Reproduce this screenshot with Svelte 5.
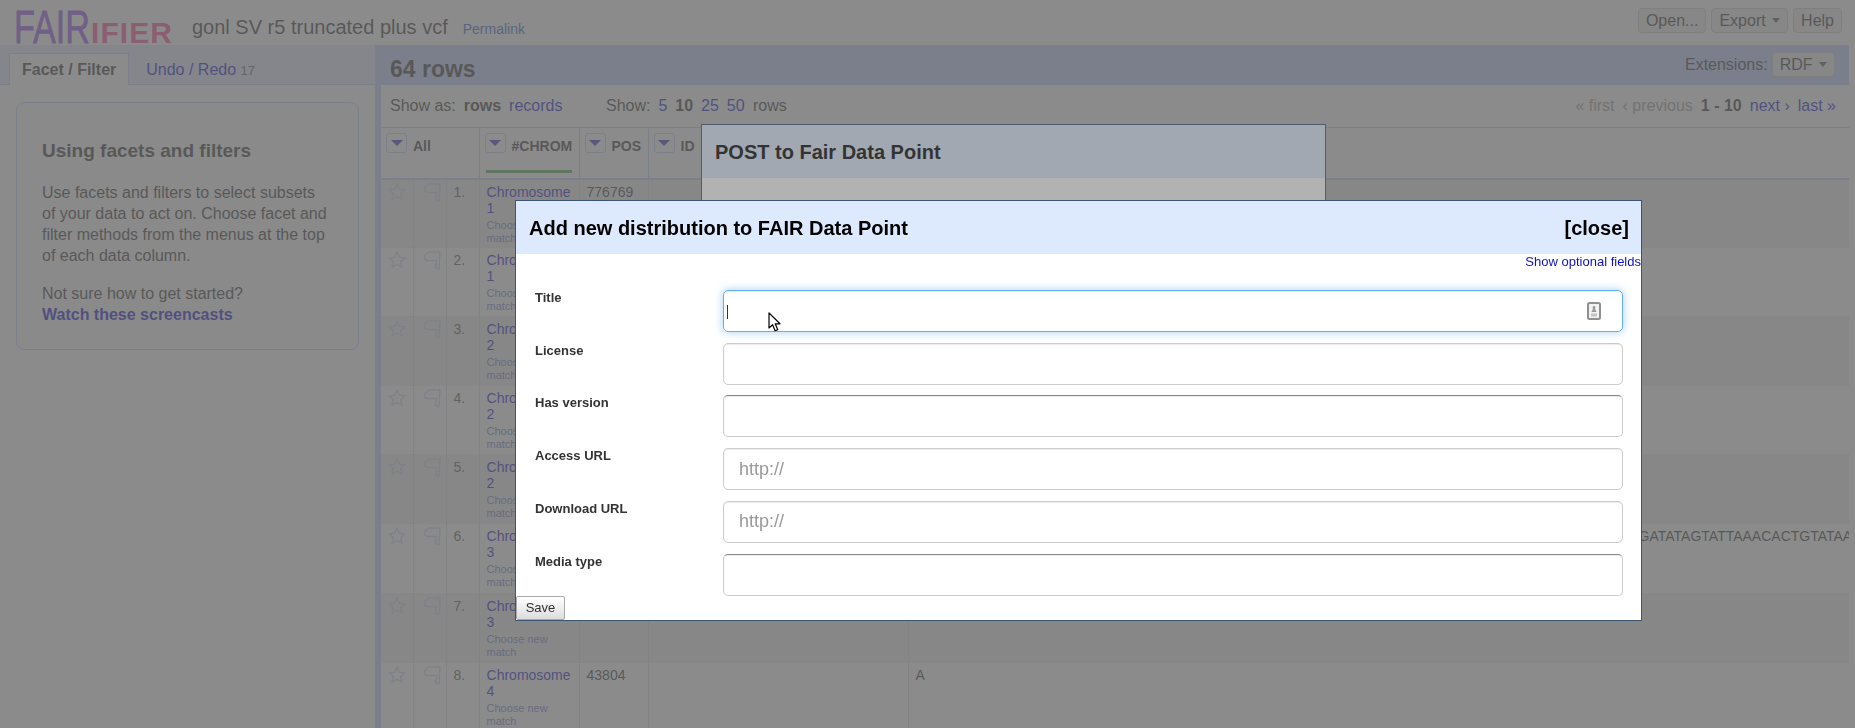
<script>
  const rows = [
    { n: 1, chrom: 1, pos: "776769", ref: "" },
    { n: 2, chrom: 1, pos: "1058020", ref: "" },
    { n: 3, chrom: 2, pos: "34128", ref: "" },
    { n: 4, chrom: 2, pos: "88902", ref: "" },
    { n: 5, chrom: 2, pos: "120417", ref: "" },
    { n: 6, chrom: 3, pos: "60251", ref: "ATTAGC".repeat(12) + "TGACATG" + "GATATAGTATTAAACACTGTATAAGCTTAG" },
    { n: 7, chrom: 3, pos: "71133", ref: "" },
    { n: 8, chrom: 4, pos: "43804", ref: "A" },
  ];

  const columns = [
    { name: "All", span: 3 },
    { name: "#CHROM", bar: true },
    { name: "POS" },
    { name: "ID" },
    { name: "" },
  ];

  const fields = [
    { label: "Title", focus: true },
    { label: "License" },
    { label: "Has version", dark: true },
    { label: "Access URL", placeholder: "http://" },
    { label: "Download URL", placeholder: "http://" },
    { label: "Media type", dark: true },
  ];
</script>

<div class="page">
  <header class="top">
    <svg class="logo" width="160" height="36" viewBox="0 0 160 36" aria-label="FAIRifier">
      <text class="logo-fair" x="0" y="35" textLength="76" lengthAdjust="spacingAndGlyphs">FAIR</text>
      <text class="logo-ifier" x="77" y="35" textLength="81" lengthAdjust="spacing">IFIER</text>
    </svg>
    <span class="project">gonl SV r5 truncated plus vcf</span>
    <a class="permalink" href="#top">Permalink</a>
    <div class="top-actions">
      <button class="btn">Open...</button>
      <button class="btn">Export <i class="caret"></i></button>
      <button class="btn">Help</button>
    </div>
  </header>

  <div class="main">
    <aside class="left">
      <div class="tabs">
        <span class="tab active">Facet / Filter</span>
        <span class="tab"><a href="#top">Undo / Redo</a> <small>17</small></span>
      </div>
      <div class="help">
        <h2>Using facets and filters</h2>
        <p>Use facets and filters to select subsets of your data to act on. Choose facet and filter methods from the menus at the top of each data column.</p>
        <p>Not sure how to get started?<br /><a href="#top"><b>Watch these screencasts</b></a></p>
      </div>
    </aside>

    <section class="right">
      <div class="summary">
        <h1>64 rows</h1>
        <div class="ext">Extensions: <button class="btn">RDF <i class="caret"></i></button></div>
      </div>
      <div class="view">
        <div class="controls">
          <span class="mode">Show as: <b>rows</b> <a href="#top">records</a></span>
          <span class="size">Show: <a href="#top">5</a> <b>10</b> <a href="#top">25</a> <a href="#top">50</a> <span>rows</span></span>
          <span class="pager">
            <span class="off">« first</span>
            <span class="off">‹ previous</span>
            <b>1 - 10</b>
            <a href="#top">next ›</a>
            <a href="#top">last »</a>
          </span>
        </div>
        <table>
          <colgroup>
            <col style="width:32px" /><col style="width:33px" /><col style="width:33px" />
            <col style="width:100px" /><col style="width:69px" /><col style="width:260px" /><col />
          </colgroup>
          <thead>
            <tr>
              {#each columns as col}
                <th colspan={col.span || 1}>
                  {#if col.name}
                    <div class="col-head">
                      <span class="menu"><i></i></span>
                      <span class="col-name">{col.name}</span>
                    </div>
                  {/if}
                  {#if col.bar}<div class="recon-bar"></div>{/if}
                </th>
              {/each}
            </tr>
          </thead>
          <tbody>
            {#each rows as row}
              <tr class:odd={row.n % 2 === 1}>
                <td class="icon">
                  <svg width="18" height="18" viewBox="0 0 18 18"><path d="M9 1l2.3 5.2 5.7.6-4.3 3.8 1.3 5.6L9 13.3l-5 2.9 1.3-5.6L1 6.8l5.7-.6z" /></svg>
                </td>
                <td class="icon flag">
                  <svg width="18" height="19" viewBox="0 0 18 19"><path d="M1.5 4.5L6 1h11l-1 17-3.5-1.5 1-7H4L1.5 8z" /></svg>
                </td>
                <td class="num">{row.n}.</td>
                <td>
                  <a href="#top">Chromosome {row.chrom}</a>
                  <div class="match">Choose new match</div>
                </td>
                <td>{row.pos}</td>
                <td></td>
                <td class="ref">{row.ref}</td>
              </tr>
            {/each}
          </tbody>
        </table>
      </div>
    </section>
  </div>
</div>

<div class="overlay"></div>
<div class="dialog post">
  <div class="dialog-head"><span>POST to Fair Data Point</span></div>
</div>

<div class="overlay"></div>
<div class="dialog add">
  <div class="dialog-head">
    <span>Add new distribution to FAIR Data Point</span>
    <span>[close]</span>
  </div>
  <div class="optional"><a href="#top">Show optional fields</a></div>
  <form class="form">
    {#each fields as field}
      <div class="label">{field.label}</div>
      <div class="input" class:focus={field.focus} class:dark={field.dark}>
        {#if field.placeholder}<span class="placeholder">{field.placeholder}</span>{/if}
        {#if field.focus}
          <i class="text-caret"></i>
          <svg class="contact" width="14" height="18" viewBox="0 0 14 18">
            <rect x="1" y="1" width="12" height="16" rx="1.5" fill="#f2f2f2" stroke="#909090" stroke-width="2" />
            <path d="M7 4a1.4 1.4 0 0 1 .9 2.5L9.5 10h-5l1.6-3.5A1.4 1.4 0 0 1 7 4z" fill="#999" />
            <rect x="4" y="11.5" width="6" height="3" fill="#c4c4c4" />
          </svg>
        {/if}
      </div>
    {/each}
  </form>
  <button class="save">Save</button>
  <svg class="pointer" width="14" height="20" viewBox="0 0 14 20">
    <path d="M1 1v15l3.6-3.3 2.5 6 2.6-1.1-2.5-5.8H12z" fill="#fff" stroke="#000" stroke-width="1.2" stroke-linejoin="round" />
  </svg>
</div>

<style>
  :global(body) {
    margin: 0;
    font-family: "Liberation Sans", Arial, sans-serif;
    font-size: 16px;
    color: #333;
    overflow: hidden;
  }

  a {
    color: #11c;
    text-decoration: none;
  }

  .page {
    height: 728px;
    overflow: hidden;
    background: #fff;
    display: flex;
    flex-direction: column;
  }

  .top {
    flex: 0 0 45px;
    display: flex;
    align-items: flex-start;
    padding: 0 13px 0 14px;
    box-sizing: border-box;
  }

  .logo {
    margin: 8px 18px 0 0;
    flex-shrink: 0;
    overflow: visible;
  }

  .logo-fair {
    font-family: "Liberation Sans", sans-serif;
    font-size: 47px;
    fill: #9550e8;
    stroke: #9550e8;
    stroke-width: 0.8;
  }

  .logo-ifier {
    font-family: "Liberation Sans", sans-serif;
    font-weight: 700;
    font-size: 30px;
    fill: #ff4a96;
  }

  .project {
    font-size: 20px;
    line-height: 24px;
    margin: 15px 15px 0 0;
  }

  .permalink {
    font-size: 14px;
    line-height: 16px;
    color: #36c;
    margin-top: 21px;
  }

  .top-actions {
    margin: 8px 0 0 auto;
    display: flex;
    gap: 5px;
  }

  .btn {
    font: inherit;
    font-size: 16px;
    color: #333;
    height: 25px;
    padding: 0 7px;
    background: #eee;
    border: 1px solid #ccc;
    border-radius: 4px;
    white-space: nowrap;
  }

  .caret {
    display: inline-block;
    border: 4.5px solid transparent;
    border-top: 5px solid #555;
    border-bottom: 0;
    margin: 0 0 2px 2px;
    vertical-align: middle;
  }

  .main {
    flex: 1;
    display: flex;
    min-height: 0;
  }

  .left {
    flex: 0 0 375px;
  }

  .tabs {
    height: 40px;
    box-sizing: border-box;
    background: #e3e9ff;
    border-bottom: 1px solid #bcf;
    padding: 8px 0 0 9px;
    display: flex;
  }

  .tab {
    height: 32px;
    box-sizing: border-box;
    padding: 7px 12px 0;
    margin-right: 5px;
    border: 1px solid transparent;
    border-bottom: 0;
  }

  .tab.active {
    background: #fff;
    border-color: #bcf;
    font-weight: 700;
    margin-right: 4px;
  }

  .tab small {
    font-size: 13px;
    color: #666;
  }

  .help {
    margin: 17px 16px 0;
    height: 248px;
    box-sizing: border-box;
    padding: 37px 29px 0 25px;
    border: 1px solid #bcf;
    border-radius: 8px;
    font-size: 16px;
    line-height: 21px;
    background: #f8f8f8;
  }

  .help h2 {
    margin: 0 0 20px;
    font-size: 19px;
    line-height: 22px;
  }

  .help p {
    margin: 0 0 17px;
  }

  .right {
    flex: 1;
    min-width: 0;
    margin-right: 6px;
    display: flex;
    flex-direction: column;
  }

  .summary {
    flex: 0 0 40px;
    background: #bcf;
    display: flex;
    align-items: center;
    justify-content: space-between;
    padding: 0 14px 0 15px;
  }

  .summary h1 {
    margin: 8px 0 0;
    font-size: 23px;
  }

  .ext {
    display: flex;
    align-items: center;
    gap: 4px;
    margin-top: -1px;
  }

  .view {
    flex: 1;
    border-left: 6px solid #bcf;
    min-height: 0;
  }

  .controls {
    height: 42px;
    display: flex;
    align-items: center;
    padding: 0 13px 0 9px;
    box-sizing: border-box;
  }

  .mode {
    width: 216px;
  }

  .size a,
  .size b,
  .mode b,
  .mode a {
    margin-left: 3.5px;
  }

  .size span {
    margin-left: 4px;
  }

  .pager {
    margin-left: auto;
    display: flex;
    gap: 8px;
  }

  .pager .off {
    color: #999;
  }

  table {
    width: 100%;
    table-layout: fixed;
    border-collapse: collapse;
    font-size: 14px;
    border-top: 1px solid #bcf;
  }

  th {
    height: 51px;
    padding: 5px 5px 0;
    box-sizing: border-box;
    border-bottom: 2px solid #bcf;
    border-right: 1px solid #bcf;
    text-align: left;
    vertical-align: top;
    font-size: 14px;
  }

  th:last-child {
    border-right: 0;
  }

  .col-head {
    display: flex;
    align-items: flex-start;
    gap: 6px;
    white-space: nowrap;
  }

  .col-name {
    line-height: 16px;
    margin-top: 5px;
  }

  .menu {
    width: 21px;
    height: 20px;
    box-sizing: border-box;
    border: 1px solid #bcf;
    border-radius: 3px;
    display: flex;
    justify-content: center;
    padding-top: 6px;
    flex-shrink: 0;
  }

  .menu i {
    width: 0;
    height: 0;
    border: 6px solid transparent;
    border-top: 6px solid #33c;
    border-bottom: 0;
  }

  .recon-bar {
    height: 3px;
    margin: 16px 2px 0 1px;
    background: #5a5;
  }

  td {
    height: 69.1px;
    box-sizing: border-box;
    padding: 4px 7px 0;
    vertical-align: top;
    border-top: 1px dotted #ddd;
    border-right: 1px solid #ddd;
    line-height: 16px;
    overflow: hidden;
    white-space: normal;
  }

  td:last-child {
    border-right: 0;
  }

  tr.odd td {
    background: #eee;
  }

  tbody tr:first-child td {
    border-top: 0;
  }

  td.icon {
    padding: 3px 0 0 7px;
  }

  td.flag {
    padding-left: 9px;
  }

  .icon svg {
    display: block;
    fill: none;
    stroke: #ccd6f4;
    stroke-width: 1.5;
    stroke-linejoin: round;
  }

  .num {
    color: #555;
  }

  .match {
    font-size: 11px;
    line-height: 13px;
    margin-top: 3px;
    color: #6a7fd0;
  }

  .ref {
    white-space: nowrap;
  }

  .overlay {
    position: fixed;
    inset: 0;
    background: #666;
    opacity: 0.5;
  }

  .dialog {
    position: fixed;
    box-sizing: border-box;
    background: #fff;
    border: 1px solid #3c5573;
  }

  .dialog-head {
    height: 53px;
    background: #ddeafd;
    color: #000;
    font-size: 20px;
    font-weight: 700;
    display: flex;
    align-items: center;
    justify-content: space-between;
    padding: 2px 12px 0 13px;
    box-sizing: border-box;
  }

  .post {
    left: 701px;
    top: 124px;
    width: 625px;
    height: 300px;
  }

  .add {
    left: 515px;
    top: 200px;
    width: 1127px;
    height: 421px;
  }

  .optional {
    text-align: right;
    font-size: 13px;
    line-height: 16px;
  }

  .form {
    margin: 19.8px 18px 0 19px;
    display: grid;
    grid-template-columns: 188px 1fr;
    grid-auto-rows: 42px;
    row-gap: 10.8px;
  }

  .label {
    font-size: 13px;
    font-weight: 700;
    line-height: 16px;
  }

  .input {
    position: relative;
    box-sizing: border-box;
    border: 1px solid #ccc;
    border-radius: 5px;
    display: flex;
    align-items: center;
    padding: 0 15px;
    box-shadow: inset 0 1px 1px rgba(0, 0, 0, 0.08);
  }

  .input.dark {
    border-top-color: #888;
  }

  .input.focus {
    border-color: #66afe9;
    box-shadow: inset 0 1px 1px rgba(0, 0, 0, 0.08), 0 0 8px rgba(102, 175, 233, 0.6);
  }

  .placeholder {
    font-size: 18px;
    color: #999;
  }

  .text-caret {
    position: absolute;
    left: 3px;
    top: 14px;
    width: 1px;
    height: 14px;
    background: #333;
  }

  .contact {
    position: absolute;
    right: 21px;
    top: 11px;
  }

  .save {
    position: absolute;
    left: 0;
    bottom: 0;
    width: 49px;
    height: 24px;
    padding: 0 0 2px;
    font: inherit;
    font-size: 13px;
    color: #333;
    background: linear-gradient(#fff, #ddd);
    border: 1px solid #aaa;
    border-radius: 2px;
  }

  .pointer {
    position: absolute;
    left: 252px;
    top: 111px;
  }
</style>
